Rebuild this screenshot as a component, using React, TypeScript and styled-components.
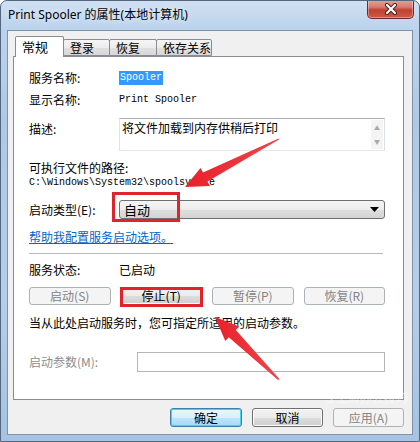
import React from 'react';
import styled, { createGlobalStyle } from 'styled-components';

const Global = createGlobalStyle`
  html, body { margin: 0; padding: 0; background: #ffffff; }
  body {
    font-family: "Noto Sans CJK SC", "Noto Sans", sans-serif;
    font-size: 12px;
    color: #000;
  }
  * { box-sizing: border-box; }
`;

const Window = styled.div`
  position: relative;
  width: 420px;
  height: 442px;
  border: 1px solid #54677e;
  border-radius: 7px 7px 0 0;
  background: linear-gradient(180deg, #cfe0f2 0px, #bcd3ec 28px, #aec9e6 120px, #b4cdea 300px, #a6c3e3 442px);
  padding: 0 6px 6px 6px;
  display: flex;
  flex-direction: column;
  overflow: hidden;
`;

const TitleBar = styled.div`
  height: 29px;
  display: flex;
  align-items: flex-start;
  justify-content: space-between;
`;

const Title = styled.div`
  margin: 6px 0 0 1px;
  font-family: "Noto Sans", "Noto Sans CJK SC", sans-serif;
  font-size: 12px;
  line-height: 16px;
  color: #000;
  text-shadow: 0 0 6px rgba(255, 255, 255, 0.9);
`;

const CloseButton = styled.div`
  width: 47px;
  height: 19px;
  margin: -1px -1px 0 0;
  border: 1px solid #6b2a2a;
  border-top: none;
  border-radius: 0 0 5px 5px;
  background: linear-gradient(180deg, #e3a59a 0%, #d27a6b 40%, #c2412f 55%, #c95b48 100%);
  box-shadow: inset 0 0 0 1px rgba(255, 255, 255, 0.35);
  display: flex;
  align-items: center;
  justify-content: center;
`;

const Client = styled.div`
  flex: 1;
  background: #f0f0f0;
  border: 1px solid #7d92ab;
  padding: 5px 8px 0 5px;
  display: flex;
  flex-direction: column;
`;

const TabRow = styled.div`
  height: 20px;
  display: flex;
  align-items: flex-end;
  padding-left: 2px;
  position: relative;
  z-index: 1;
`;

const Tab = styled.div<{ $w: number; $active?: boolean }>`
  width: ${(p) => p.$w}px;
  height: ${(p) => (p.$active ? 21 : 17)}px;
  margin-bottom: ${(p) => (p.$active ? -1 : 0)}px;
  margin-right: -1px;
  border: 1px solid #898c95;
  border-bottom: ${(p) => (p.$active ? 'none' : '1px solid #898c95')};
  border-radius: 2px 2px 0 0;
  background: ${(p) =>
    p.$active ? '#ffffff' : 'linear-gradient(180deg, #f5f5f5 0%, #ececec 50%, #e0e0e0 51%, #d8d8d8 100%)'};
  position: relative;
  z-index: ${(p) => (p.$active ? 2 : 1)};
  font-size: ${(p) => (p.$active ? 13 : 12)}px;
  line-height: ${(p) => (p.$active ? 20 : 15)}px;
  padding-left: 6px;
  color: #000;
`;

const Panel = styled.div`
  height: 344px;
  border: 1px solid #898c95;
  background: #ffffff;
  padding: 0 18px 0 15px;
  display: flex;
  flex-direction: column;
`;

const Row = styled.div<{ $mt: number; $label?: number; $align?: string }>`
  display: grid;
  grid-template-columns: ${(p) => p.$label ?? 90}px 1fr;
  align-items: ${(p) => p.$align ?? 'center'};
  margin-top: ${(p) => p.$mt}px;
  min-height: 16px;
`;

const Label = styled.div<{ $disabled?: boolean; $mt?: number }>`
  font-size: 12px;
  line-height: 16px;
  color: ${(p) => (p.$disabled ? '#8d8d8d' : '#000')};
  margin-top: ${(p) => p.$mt ?? 0}px;
  white-space: nowrap;
`;

const Mono = styled.div`
  font-family: "Liberation Mono", "DejaVu Sans Mono", monospace;
  font-size: 10px;
  line-height: 14px;
  white-space: nowrap;
`;

const Selected = styled.span`
  display: inline-block;
  background: #3399ff;
  color: #fff;
  padding: 0 1px;
  line-height: 14px;
`;

const Block = styled.div<{ $mt: number; $h?: number }>`
  margin-top: ${(p) => p.$mt}px;
  min-height: ${(p) => p.$h ?? 16}px;
  line-height: ${(p) => p.$h ?? 16}px;
  white-space: nowrap;
`;

const DescBox = styled.div`
  height: 33px;
  border: 1px solid #abadb3;
  border-color: #abadb3 #dbdfe6 #e3e9ef #e2e3ea;
  display: flex;
  justify-content: space-between;
  background: #fff;
`;

const DescText = styled.div`
  padding: 1px 0 0 2px;
  font-size: 12px;
  line-height: 16px;
`;

const ScrollBar = styled.div`
  width: 12px;
  margin: 1px 1px 1px 0;
  background: #f4f4f4;
  display: flex;
  flex-direction: column;
  justify-content: space-between;
  align-items: center;
  padding: 4px 0;
  color: #a8a8a8;
  font-size: 6px;
  line-height: 7px;
`;

const Select = styled.div`
  height: 19px;
  border: 1px solid #707070;
  border-radius: 3px;
  background: linear-gradient(180deg, #f4f4f4 0%, #ececec 50%, #dedede 51%, #d4d4d4 100%);
  display: flex;
  align-items: center;
  justify-content: space-between;
  padding: 0 5px 0 4px;
  font-size: 13px;
`;

const Link = styled.a`
  color: #0066cc;
  text-decoration: underline;
  font-size: 12px;
  line-height: 16px;
`;

const Separator = styled.div<{ $mt: number }>`
  margin-top: ${(p) => p.$mt}px;
  width: 354px;
  height: 1px;
  background: #b9b9b9;
`;

const ButtonGrid = styled.div<{ $mt: number }>`
  display: grid;
  grid-template-columns: repeat(4, 1fr);
  column-gap: 10px;
  margin-top: ${(p) => p.$mt}px;
`;

const Button = styled.div<{ $disabled?: boolean; $default?: boolean; $w?: number; $h?: number }>`
  height: ${(p) => p.$h ?? 18}px;
  width: ${(p) => (p.$w ? `${p.$w}px` : 'auto')};
  border: 1px solid ${(p) => (p.$disabled ? '#adb2b5' : p.$default ? '#3c7fb1' : '#707070')};
  border-radius: 3px;
  background: ${(p) =>
    p.$disabled
      ? '#f4f4f4'
      : p.$default
      ? 'linear-gradient(180deg, #eaf6fd 0%, #d9f0fc 50%, #bee6fd 51%, #a7d9f5 100%)'
      : 'linear-gradient(180deg, #f2f2f2 0%, #ebebeb 50%, #dddddd 51%, #cfcfcf 100%)'};
  box-shadow: ${(p) => (p.$default ? 'inset 0 0 0 1px #48d1f5' : p.$disabled ? 'none' : 'inset 0 0 0 1px #fcfcfc')};
  color: ${(p) => (p.$disabled ? '#838383' : '#000')};
  display: flex;
  align-items: center;
  justify-content: center;
  font-size: 12px;
  line-height: 16px;
  white-space: nowrap;
`;

const Input = styled.div`
  height: 20px;
  border: 1px solid #b5b5b5;
  background: #fff;
`;

const Footer = styled.div`
  margin-top: 8px;
  display: flex;
  justify-content: flex-end;
  gap: 10px;
  padding-right: 0;
`;

const Highlight = styled.div<{ $x: number; $y: number; $w: number; $h: number }>`
  position: absolute;
  left: ${(p) => p.$x}px;
  top: ${(p) => p.$y}px;
  width: ${(p) => p.$w}px;
  height: ${(p) => p.$h}px;
  border: 3px solid #e3232c;
  pointer-events: none;
`;

const ArrowLayer = styled.svg`
  position: absolute;
  left: -1px;
  top: -1px;
  width: 420px;
  height: 442px;
  pointer-events: none;
`;

const Watermark = styled.div`
  position: absolute;
  left: 325px;
  top: 388px;
  font-size: 12px;
  color: rgba(255, 255, 255, 0.55);
  pointer-events: none;
`;

export default function App() {
  return (
    <>
      <Global />
      <Window>
        <TitleBar>
          <Title>Print Spooler 的属性(本地计算机)</Title>
          <CloseButton>
            <svg width="14" height="12" viewBox="0 0 14 12">
              <path d="M3 2 L11 10 M11 2 L3 10" stroke="#4a1c1c" strokeWidth="4" strokeLinecap="round" />
              <path d="M3 2 L11 10 M11 2 L3 10" stroke="#ffffff" strokeWidth="2.2" strokeLinecap="round" />
            </svg>
          </CloseButton>
        </TitleBar>
        <Client>
          <TabRow>
            <Tab $w={49} $active>常规</Tab>
            <Tab $w={47}>登录</Tab>
            <Tab $w={48}>恢复</Tab>
            <Tab $w={56}>依存关系</Tab>
          </TabRow>
          <Panel>
            <Row $mt={13}>
              <Label>服务名称:</Label>
              <Mono>
                <Selected>Spooler</Selected>
              </Mono>
            </Row>
            <Row $mt={6}>
              <Label>显示名称:</Label>
              <Mono>Print Spooler</Mono>
            </Row>
            <Row $mt={10} $align="start">
              <Label $mt={3}>描述:</Label>
              <DescBox>
                <DescText>将文件加载到内存供稍后打印</DescText>
                <ScrollBar>
                  <span>▲</span>
                  <span>▼</span>
                </ScrollBar>
              </DescBox>
            </Row>
            <Block $mt={9}>可执行文件的路径:</Block>
            <Block $mt={0} $h={14}>
              <Mono>C:\Windows\System32\spoolsv.exe</Mono>
            </Block>
            <Row $mt={10}>
              <Label>启动类型(E):</Label>
              <Select>
                <span>自动</span>
                <svg width="9" height="5" viewBox="0 0 9 5">
                  <path d="M0 0 H9 L4.5 5 Z" fill="#000" />
                </svg>
              </Select>
            </Row>
            <Block $mt={10}>
              <Link>帮助我配置服务启动选项。</Link>
            </Block>
            <Separator $mt={8} />
            <Row $mt={8}>
              <Label>服务状态:</Label>
              <Label>已启动</Label>
            </Row>
            <ButtonGrid $mt={9}>
              <Button $disabled>启动(S)</Button>
              <Button>停止(T)</Button>
              <Button $disabled>暂停(P)</Button>
              <Button $disabled>恢复(R)</Button>
            </ButtonGrid>
            <Block $mt={10}>当从此处启动服务时，您可指定所适用的启动参数。</Block>
            <Row $mt={21} $label={108}>
              <Label $disabled>启动参数(M):</Label>
              <Input />
            </Row>
          </Panel>
          <Footer>
            <Button $default $w={72} $h={19}>确定</Button>
            <Button $w={71} $h={19}>取消</Button>
            <Button $disabled $w={71} $h={19}>应用(A)</Button>
          </Footer>
        </Client>
        <Watermark>S 上海办公技巧</Watermark>
        <Highlight $x={111} $y={191} $w={68} $h={30} />
        <Highlight $x={119} $y={286} $w={83} $h={20} />
        <ArrowLayer viewBox="0 0 420 442">
          <defs>
            <linearGradient id="ar" x1="0" y1="0" x2="1" y2="0">
              <stop offset="0" stopColor="#e8202a" />
              <stop offset="1" stopColor="#f0454c" />
            </linearGradient>
          </defs>
          <polygon
            points="185,187 210,186 207.5,181.5 279,139.5 278.5,138.5 203,172.5 200.5,168"
            fill="url(#ar)"
          />
          <polygon
            points="215,317 225.3,340.9 228.8,337.3 278,380 279.5,379 235.8,330.1 239.2,326.5"
            fill="url(#ar)"
          />
        </ArrowLayer>
      </Window>
    </>
  );
}
